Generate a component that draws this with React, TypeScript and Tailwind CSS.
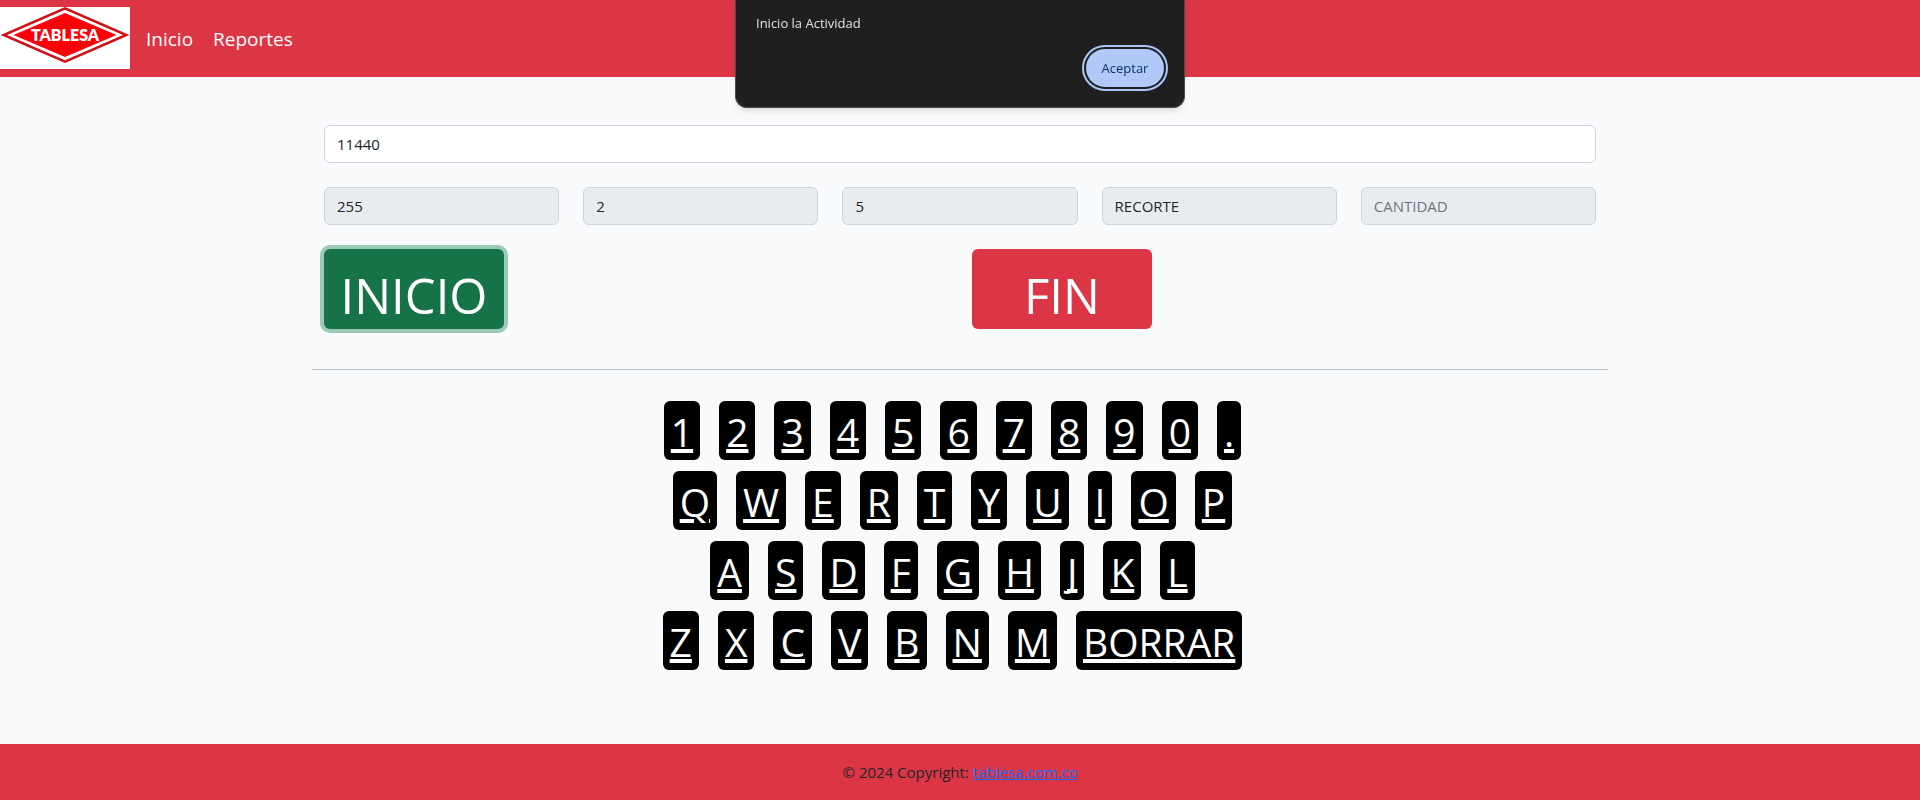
import { useState } from "react";

const KEY_ROWS: string[][] = [
  ["1", "2", "3", "4", "5", "6", "7", "8", "9", "0", "."],
  ["Q", "W", "E", "R", "T", "Y", "U", "I", "O", "P"],
  ["A", "S", "D", "F", "G", "H", "J", "K", "L"],
  ["Z", "X", "C", "V", "B", "N", "M", "BORRAR"],
];

const DETAILS = [
  { label: "Ancho", value: "255" },
  { label: "Alto", value: "2" },
  { label: "Largo", value: "5" },
  { label: "Tipo", value: "RECORTE" },
  { label: "Cantidad", value: "", placeholder: "CANTIDAD" },
];

function Logo() {
  return (
    <svg viewBox="0 0 130 62" className="block h-[62px] w-[130px]" role="img" aria-label="Tablesa">
      <rect width="130" height="62" fill="#fff" />
      <polygon points="65,0 129.5,28 65,56 0.5,28" fill="#d40f14" />
      <polygon points="65,2.8 123,28 65,53.2 7,28" fill="#fff" />
      <polygon points="65,6 116.5,28 65,50 13.5,28" fill="#fb0007" />
      <text
        x="65"
        y="34"
        textAnchor="middle"
        fill="#fff"
        fontSize="16"
        fontWeight="800"
        fontFamily="Lato, 'Liberation Sans', sans-serif"
      >
        TABLESA
      </text>
    </svg>
  );
}

function Header() {
  return (
    <header className="flex items-center bg-[#dc3545] pt-[7px] pb-2">
      <a href="#inicio">
        <Logo />
      </a>
      <nav className="ml-4 flex gap-5 pt-0.5 text-[19px] leading-7 text-white">
        <a href="#inicio">Inicio</a>
        <a href="#reportes">Reportes</a>
      </nav>
    </header>
  );
}

function AlertDialog({ onClose }: { onClose: () => void }) {
  return (
    <div
      role="alertdialog"
      aria-label="Inicio la Actividad"
      className="fixed top-0 left-1/2 flex w-[450px] -translate-x-1/2 flex-col rounded-b-xl border border-t-0 border-[#4b4b4b] bg-[#1f1f1f] px-5 pt-[13px] pb-5 shadow-md"
    >
      <p className="text-[13px] leading-5 text-[#e3e3e3]">Inicio la Actividad</p>
      <button
        type="button"
        onClick={onClose}
        className="mt-4 h-[38px] w-[78px] self-end rounded-full bg-[#b0c9f8] text-[13px] text-[#0a2f6b] outline-2 outline-offset-2 outline-[#a8c7fa]"
      >
        Aceptar
      </button>
    </div>
  );
}

export default function App() {
  const [code, setCode] = useState("11440");
  const [open, setOpen] = useState(true);

  const press = (key: string) =>
    setCode((current) => (key === "BORRAR" ? current.slice(0, -1) : current + key));

  return (
    <div className="bg-[#f8fafc] font-['Open_Sans','Noto_Sans',sans-serif] text-[15px] leading-6 text-[#212529]">
      <Header />

      <main className="mx-auto max-w-[1320px] px-3 pt-12 pb-[74px]">
        <div className="px-3">
          <input
            aria-label="Código"
            value={code}
            onChange={(event) => setCode(event.target.value)}
            className="block h-[38px] w-full rounded-md border border-[#ced4da] bg-white px-3"
          />

          <div className="mt-6 grid grid-cols-5 gap-6">
            {DETAILS.map((field) => (
              <input
                key={field.label}
                aria-label={field.label}
                defaultValue={field.value}
                placeholder={field.placeholder}
                disabled
                className="h-[38px] w-full min-w-0 rounded-md border border-[#ced4da] bg-[#e9ecef] px-3 placeholder:text-[#6c757d]"
              />
            ))}
          </div>

          <div className="mt-6 grid grid-cols-2 gap-6 text-[49px] leading-[68px] text-white">
            <button type="button" className="h-20 w-[180px] rounded-md bg-[#157347] pt-3 ring-4 ring-[#9bcbb6]">
              INICIO
            </button>
            <button type="button" className="h-20 w-[180px] rounded-md bg-[#dc3545] pt-3">
              FIN
            </button>
          </div>
        </div>

        <hr className="mt-10 mb-[31px] border-[#c3c6c8]" />

        <div className="flex flex-col items-center gap-[11px] pr-[15px]">
          {KEY_ROWS.map((row) => (
            <div key={row[0]} className="flex gap-[19px]">
              {row.map((key) => (
                <button
                  key={key}
                  type="button"
                  onClick={() => press(key)}
                  className={`rounded-md bg-black px-[7px] pt-[7px] pb-1 text-[39px] leading-[48px] text-white underline decoration-4 underline-offset-2 ${
                    key === "Q" ? "" : "[text-decoration-skip-ink:none]"
                  }`}
                >
                  {key}
                </button>
              ))}
            </div>
          ))}
        </div>
      </main>

      <footer className="bg-[#dc3545] p-4 text-center">
        © 2024 Copyright:{" "}
        <a href="#tablesa" className="text-[#0d6efd] underline">
          tablesa.com.co
        </a>
      </footer>
      <div className="h-0.5 bg-white" />

      {open && <AlertDialog onClose={() => setOpen(false)} />}
    </div>
  );
}
